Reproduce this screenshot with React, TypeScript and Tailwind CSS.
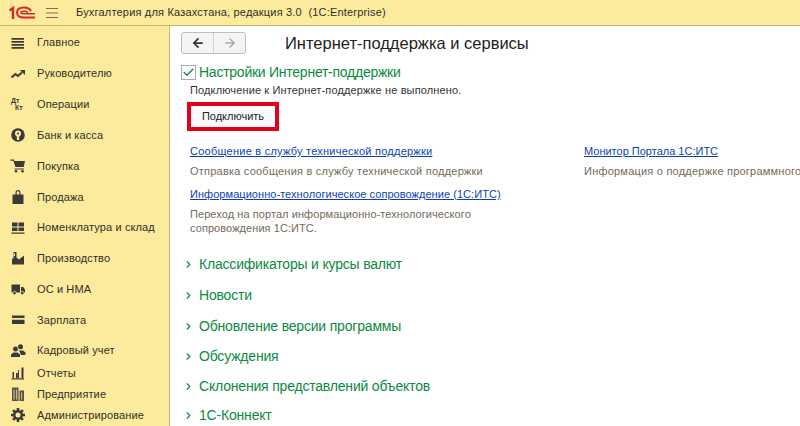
import type { ReactNode } from "react"
import { ArrowLeft, ArrowRight, Check, ChevronRight } from "lucide-react"

const dark = "#3a3a36"
const bg = "#fceb9c"

function Ico({ children }: { children: ReactNode }) {
  return (
    <svg width="16" height="16" viewBox="0 0 16 16" fill={dark} className="shrink-0">
      {children}
    </svg>
  )
}

const gearTeeth = [0, 45, 90, 135]

const menu: { label: string; h: string; icon: ReactNode }[] = [
  {
    label: "Главное",
    h: "h-[31px]",
    icon: (
      <Ico>
        <path d="M1.500 3h12.500v1.700H1.500zM1.500 6h12.500v1.700H1.500zM1.500 9h12.500v1.700H1.500zM1.500 12h12.500v1.700H1.500z" />
      </Ico>
    ),
  },
  {
    label: "Руководителю",
    h: "h-[31px]",
    icon: (
      <Ico>
        <path d="M1.500 11.500l4-3.500 2.500 2L12 6.500" fill="none" stroke={dark} strokeWidth="2" />
        <path d="M9.800 4H15v5z" />
      </Ico>
    ),
  },
  {
    label: "Операции",
    h: "h-[31px]",
    icon: (
      <span className="flex h-4 w-4 shrink-0 flex-col text-[7px] font-bold leading-[7px] text-[#3a3a36]">
        <span className="pl-[1px]">Дт</span>
        <span className="pl-[5px]">Кт</span>
      </span>
    ),
  },
  {
    label: "Банк и касса",
    h: "h-[30.5px]",
    icon: (
      <Ico>
        <circle cx="8" cy="8" r="6.800" />
        <circle cx="8" cy="6.500" r="3" fill={bg} />
        <circle cx="8" cy="6.500" r="1" />
        <path d="M6.800 8.500h2.400V13H6.800z" fill={bg} />
      </Ico>
    ),
  },
  {
    label: "Покупка",
    h: "h-[31px]",
    icon: (
      <Ico>
        <path d="M.500 1.500H4l.4 1.500H15l-1.300 6H5.500L3.300 2.800H.500z" />
        <path d="M4.500 10.500h9.500v1H4.500z" />
        <circle cx="6" cy="13.300" r="1.300" />
        <circle cx="12.500" cy="13.300" r="1.300" />
      </Ico>
    ),
  },
  {
    label: "Продажа",
    h: "h-[30.5px]",
    icon: (
      <Ico>
        <path d="M2.500 5.500h3V3.500a2.500 2.500 0 0 1 5 0v2h3V15h-11zM6.700 5.500h2.600V3.500a1.300 1.300 0 0 0-2.600 0z" fillRule="evenodd" />
      </Ico>
    ),
  },
  {
    label: "Номенклатура и склад",
    h: "h-[31px]",
    icon: (
      <Ico>
        <path d="M2 2.500h5.500v4H2zM8.500 2.500H14v4H8.500zM2 7.500h5.500v3.500H2zM8.500 7.500H14V11H8.500zM1.500 12.500h13v1.200h-13z" />
      </Ico>
    ),
  },
  {
    label: "Производство",
    h: "h-[30.5px]",
    icon: (
      <Ico>
        <path d="M2 14.500V8.500h1.500V2h3v5.500L9 9.500l5-4v9z" />
        <path d="M3.800 3.500h1.200v2.500H3.800z" fill={bg} />
      </Ico>
    ),
  },
  {
    label: "ОС и НМА",
    h: "h-[31px]",
    icon: (
      <Ico>
        <path d="M1.500 3.500h8.500v8h-8.500zM11 6h2.300L15 8.500v3h-4z" />
        <circle cx="4.500" cy="12" r="1.700" stroke={bg} strokeWidth=".7" />
        <circle cx="12.300" cy="12" r="1.700" stroke={bg} strokeWidth=".7" />
      </Ico>
    ),
  },
  {
    label: "Зарплата",
    h: "h-[31px]",
    icon: (
      <Ico>
        <path d="M2 3.500h12.500V6H2zM2 7.800h12.500v4.200H2z" />
      </Ico>
    ),
  },
  {
    label: "Кадровый учет",
    h: "h-[27px] pt-[3px]",
    icon: (
      <Ico>
        <circle cx="10.500" cy="3.800" r="2.500" />
        <path d="M9 7.500h4l2.500 2v2.500H11z" />
        <circle cx="5.500" cy="6" r="2.800" stroke={bg} strokeWidth=".6" />
        <path d="M1 14v-2.500L3.500 9.500h4L10 11.500V14z" />
      </Ico>
    ),
  },
  {
    label: "Отчеты",
    h: "h-[21.5px]",
    icon: (
      <Ico>
        <path d="M2.500 7h1.500v6H2.500zM6 8h1.800v5H6zM8 5h1v8H8zM11.500 2.500h2V13h-2zM1.500 13.300h12.500v1.200H1.500z" />
      </Ico>
    ),
  },
  {
    label: "Предприятие",
    h: "h-[20.500px]",
    icon: (
      <Ico>
        <path d="M2 1.500h6.500V15H2zM9.500 4.500H14V15H9.500z" fill="#55544a" />
        <path d="M3.500 3.500h1.200v10H3.500zM6 3.500h1.200v10H6zM11 6.500h1.200v7H11z" fill="#c9bb7a" />
      </Ico>
    ),
  },
  {
    label: "Администрирование",
    h: "h-[20.500px]",
    icon: (
      <Ico>
        {gearTeeth.map((a) => (
          <rect key={a} x="6.700" y="1" width="2.600" height="14" transform={`rotate(${a} 8 8)`} />
        ))}
        <circle cx="8" cy="8" r="5" />
        <circle cx="8" cy="8" r="2.500" fill={bg} />
      </Ico>
    ),
  },
]

const sections: { label: string; h: string }[] = [
  { label: "Классификаторы и курсы валют", h: "h-[31px]" },
  { label: "Новости", h: "h-[31px]" },
  { label: "Обновление версии программы", h: "h-[30.500px]" },
  { label: "Обсуждения", h: "h-[30.500px]" },
  { label: "Склонения представлений объектов", h: "h-[29.500px]" },
  { label: "1С-Коннект", h: "h-[27px]" },
]

function Sidebar() {
  return (
    <aside className="w-[170px] shrink-0 border-r border-[#c9b766] bg-[#fceb9c] pt-[1px] pl-[10px] text-[11px] text-[#2f2f2b]">
      {menu.map((m) => (
        <div key={m.label} className={`flex items-center gap-[11px] whitespace-nowrap ${m.h}`}>
          <span className="flex w-4 shrink-0 justify-center">{m.icon}</span>
          <span className="tracking-[0.12px]">{m.label}</span>
        </div>
      ))}
    </aside>
  )
}

export default function App() {
  return (
    <div className="flex h-[426px] w-[800px] flex-col overflow-hidden bg-white font-['Liberation_Sans',Arial,sans-serif]">
      <header className="flex h-[26px] shrink-0 items-center border-b border-[#c9b766] bg-[#fceb9c] pl-[9px]">
        <svg width="26" height="14" viewBox="0 0 26 14" className="shrink-0">
          <path d="M.500 4.500L4 2v11" fill="none" stroke="#d8272d" strokeWidth="2.400" />
          <path d="M22 5C21 3 19 1.500 15 1.500 10.500 1.500 8 3.500 8 6.500s2.500 5 7 5h11" fill="none" stroke="#d8272d" strokeWidth="2" />
          <path d="M19 6.500c-.8-.8-2.300-1.200-3.800-1.200-1.800 0-3.200.4-3.200 1.200s1.400 1.300 3.200 1.300H26" fill="none" stroke="#d8272d" strokeWidth="1.600" />
        </svg>
        <svg width="12" height="12" viewBox="0 0 12 12" className="ml-[11px] shrink-0">
          <path d="M0 1.500h12M0 6h12M0 10.500h12" stroke="#77735a" strokeWidth="1" />
        </svg>
        <span className="ml-[18px] whitespace-nowrap text-[11px] tracking-[0.19px] text-[#2f2f2b]">
          Бухгалтерия для Казахстана, редакция 3.0&nbsp; (1С:Enterprise)
        </span>
      </header>
      <div className="flex min-h-0 flex-1">
        <Sidebar />
        <main className="min-w-0 flex-1 overflow-hidden pl-[11px] pt-[6px]">
          <div className="flex items-center">
            <div className="flex h-[22px] w-[65px] rounded-[3px] border border-[#bdbdbd] bg-[#f4f4f4]">
              <span className="flex flex-1 items-center justify-center border-r border-[#d2d2d2]">
                <ArrowLeft size={14} strokeWidth={3} color="#333" />
              </span>
              <span className="flex flex-1 items-center justify-center">
                <ArrowRight size={14} strokeWidth={2.500} color="#aaa" />
              </span>
            </div>
            <h1 className="ml-[39px] whitespace-nowrap text-[16.500px] leading-[22px] text-[#222]">
              Интернет-поддержка и сервисы
            </h1>
          </div>
          <div className="mt-[10px] flex h-[16px] items-center">
            <span className="flex h-[15px] w-[15px] shrink-0 items-center justify-center border border-[#a9a9a9] bg-white">
              <Check size={13} strokeWidth={2.500} color="#0b8f45" />
            </span>
            <span className="ml-[3px] whitespace-nowrap text-[14px] tracking-[-0.25px] text-[#0a8a42]">
              Настройки Интернет-поддержки
            </span>
          </div>
          <p className="ml-[9px] mt-[3px] whitespace-nowrap text-[11px] leading-[14px] tracking-[0.13px] text-[#333]">
            Подключение к Интернет-поддержке не выполнено.
          </p>
          <button className="ml-[6px] mt-[5px] block h-[29px] w-[92px] border-[4px] border-[#e2001a] bg-[#fafafa] text-[11px] text-[#222]">
            Подключить
          </button>
          <div className="ml-[9px] mt-[13px] flex">
            <div className="w-[394px] shrink-0 text-[11px] leading-[14px]">
              <a className="block tracking-[0.24px] text-[#0b3fb5] underline">Сообщение в службу технической поддержки</a>
              <p className="mt-[6px] tracking-[0.22px] text-[#75695a]">Отправка сообщения в службу технической поддержки</p>
              <a className="mt-[9px] block whitespace-nowrap tracking-[0.05px] text-[#0b3fb5] underline">
                Информационно-технологическое сопровождение (1С:ИТС)
              </a>
              <p className="mt-[6px] w-[300px] tracking-[0.07px] text-[#75695a]">
                Переход на портал информационно-технологического сопровождения 1С:ИТС.
              </p>
            </div>
            <div className="whitespace-nowrap text-[11px] leading-[14px]">
              <a className="block text-[#0b3fb5] underline">Монитор Портала 1С:ИТС</a>
              <p className="mt-[6px] tracking-[0.22px] text-[#75695a]">Информация о поддержке программного</p>
            </div>
          </div>
          <div className="ml-[4px] mt-[14px]">
            {sections.map((s) => (
              <div key={s.label} className={`flex items-center whitespace-nowrap ${s.h}`}>
                <ChevronRight size={11} strokeWidth={2.500} color="#0a8a42" className="-ml-[2px] shrink-0" />
                <span className="ml-[5px] text-[14px] tracking-[-0.19px] text-[#0a8a42]">{s.label}</span>
              </div>
            ))}
          </div>
        </main>
      </div>
    </div>
  )
}
